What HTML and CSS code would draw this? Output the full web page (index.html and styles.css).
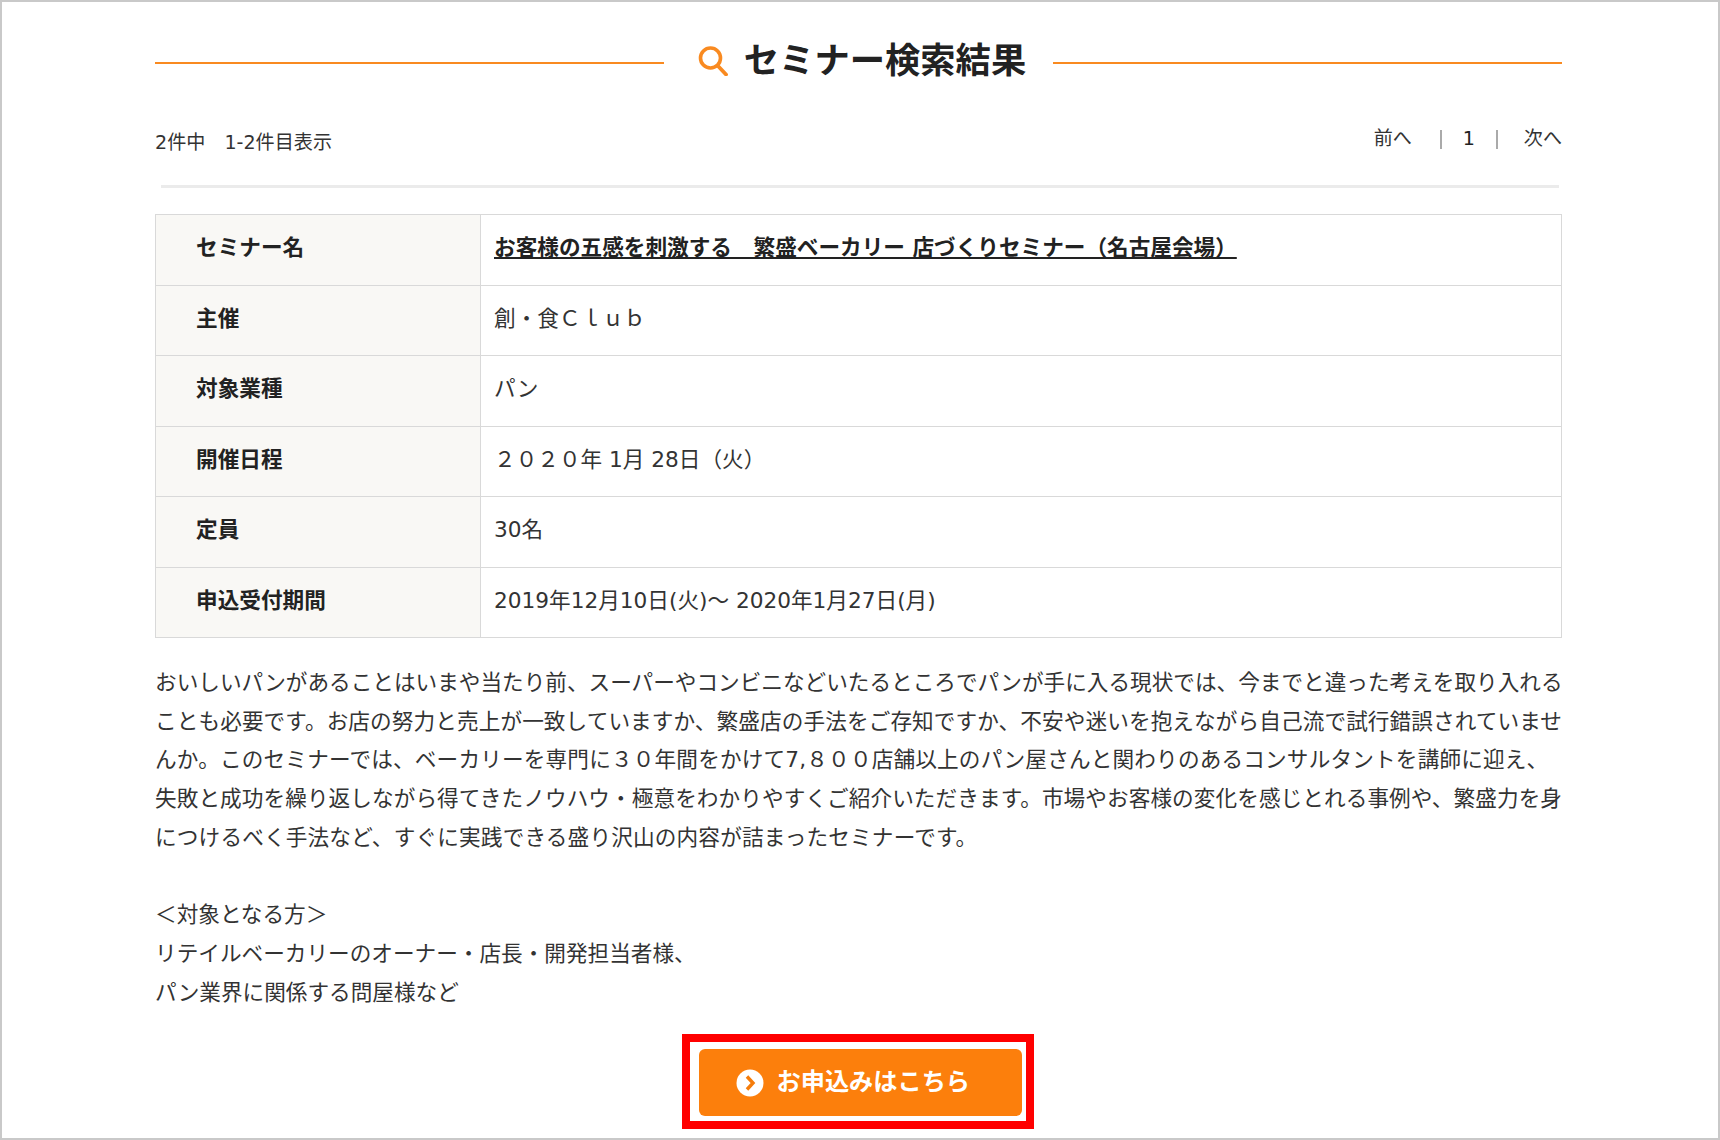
FILE: index.html
```html
<!DOCTYPE html>
<html lang="ja">
<head>
<meta charset="utf-8">
<title>セミナー検索結果</title>
<link rel="stylesheet" href="styles.css">
</head>
<body>
<main class="frame">
  <header class="heading">
    <span class="heading-line"></span>
    <h1 class="heading-title">
      <svg class="heading-icon" viewBox="0 0 30 30" width="30" height="30" aria-hidden="true"><circle cx="12.5" cy="12" r="10" fill="none" stroke="#f98a20" stroke-width="3.6"/><path d="M20 20 L28 28.5" fill="none" stroke="#f98a20" stroke-width="3.8" stroke-linecap="round"/></svg>
      <span>セミナー検索結果</span>
    </h1>
    <span class="heading-line"></span>
  </header>
  <div class="result-bar">
    <p class="result-count">2件中　1-2件目表示</p>
    <nav class="pager">
      <a class="pager-link">前へ</a>
      <span class="pager-sep"></span>
      <a class="pager-current">1</a>
      <span class="pager-sep"></span>
      <a class="pager-link">次へ</a>
    </nav>
  </div>
  <div class="divider"></div>
  <table class="info">
    <tr><th>セミナー名</th><td><a class="seminar-link">お客様の五感を刺激する　繁盛ベーカリー 店づくりセミナー（名古屋会場）</a></td></tr>
    <tr><th>主催</th><td>創・食Ｃｌｕｂ</td></tr>
    <tr><th>対象業種</th><td>パン</td></tr>
    <tr><th>開催日程</th><td>２０２０年 1月 28日（火）</td></tr>
    <tr><th>定員</th><td>30名</td></tr>
    <tr><th>申込受付期間</th><td>2019年12月10日(火)～ 2020年1月27日(月)</td></tr>
  </table>
  <div class="body-text">
    <p class="line fit">おいしいパンがあることはいまや当たり前、スーパーやコンビニなどいたるところでパンが手に入る現状では、今までと違った考えを取り入れる</p>
    <p class="line fit">ことも必要です。お店の努力と売上が一致していますか、繁盛店の手法をご存知ですか、不安や迷いを抱えながら自己流で試行錯誤されていませ</p>
    <p class="line loose">んか。このセミナーでは、ベーカリーを専門に３０年間をかけて7,８００店舗以上のパン屋さんと関わりのあるコンサルタントを講師に迎え、</p>
    <p class="line fit">失敗と成功を繰り返しながら得てきたノウハウ・極意をわかりやすくご紹介いただきます。市場やお客様の変化を感じとれる事例や、繁盛力を身</p>
    <p class="line loose">につけるべく手法など、すぐに実践できる盛り沢山の内容が詰まったセミナーです。</p>
    <p class="line">&nbsp;</p>
    <p class="line">＜対象となる方＞</p>
    <p class="line">リテイルベーカリーのオーナー・店長・開発担当者様、</p>
    <p class="line">パン業界に関係する問屋様など</p>
  </div>
  <div class="cta">
    <div class="cta-highlight">
      <a class="cta-button">
        <svg class="cta-icon" viewBox="0 0 28 28" width="28" height="28" aria-hidden="true"><circle cx="14" cy="14" r="13.5" fill="#fff"/><path d="M11 7.5 L17 14 L11 20.5" fill="none" stroke="#f57c0a" stroke-width="3.4"/></svg>
        <span class="cta-label">お申込みはこちら</span>
      </a>
    </div>
  </div>
</main>
</body>
</html>
```
FILE: styles.css
```css
* { box-sizing: border-box; }
html, body { margin: 0; padding: 0; }
body {
  width: 1720px;
  height: 1140px;
  overflow: hidden;
  background: #fff;
  color: #333;
  font-family: "DejaVu Sans", "Noto Sans CJK JP", sans-serif;
  font-size: 21.64px;
}
p, h1 { margin: 0; }
.frame {
  width: 1720px;
  height: 1140px;
  padding: 0 156px 0 153px;
  border: 2px solid #c9c9c9;
  display: flex;
  flex-direction: column;
}
.frame > * { flex: none; }
.heading {
  display: flex;
  align-items: flex-start;
  height: 100px;
}
.heading-line {
  flex: 1;
  height: 2px;
  background: #f98a20;
  margin-top: 60px;
}
.heading-title {
  width: 389px;
  height: 60px;
  margin-top: 29px;
  padding-left: 7px;
  display: flex;
  align-items: center;
  justify-content: center;
  gap: 16px;
  font-size: 35.3px;
  font-weight: 700;
  line-height: 48px;
  color: #222;
}
.heading-icon { flex: none; }
.result-bar {
  display: flex;
  justify-content: space-between;
  align-items: flex-start;
  height: 83px;
  font-size: 19.1px;
  line-height: 28px;
}
.result-count { padding-top: 27px; }
.pager { display: flex; align-items: center; height: 28px; margin-top: 23px; }
.pager-sep { width: 2px; height: 19px; background: #aaa; }
.pager-link { color: #333; }
.pager-link:first-child { margin-right: 28px; }
.pager-link:last-child { margin-left: 26px; }
.pager-current { width: 54px; text-align: center; color: #222; }
.divider {
  height: 3px;
  margin: 0 3px 0 6px;
  background: #ebebeb;
}
.info {
  width: 100%;
  margin-top: 26px;
  border-collapse: collapse;
  table-layout: fixed;
  line-height: 30px;
}
.info th, .info td {
  height: 70.5px;
  border: 1px solid #d9d9d9;
  padding: 0 0 3px 13px;
  text-align: left;
  vertical-align: middle;
}
.info th {
  width: 325px;
  padding-left: 40px;
  background: #f9f8f5;
  font-weight: 700;
  color: #222;
}
.seminar-link { font-weight: 700; color: #222; text-decoration: underline; }
.body-text { margin-top: 26px; line-height: 38.7px; }
.line { white-space: nowrap; }
.fit { text-align: justify; text-align-last: justify; }
.loose { letter-spacing: 0.17px; }
.cta { margin-top: 22px; padding-right: 2px; display: flex; justify-content: center; }
.cta-highlight {
  width: 352px;
  height: 95px;
  border: 8px solid #ff0000;
  padding: 7px 4px 5px 9px;
  background: #fff;
}
.cta-button {
  display: flex;
  align-items: center;
  height: 100%;
  padding-left: 37px;
  gap: 13px;
  background: #fc7f0c;
  border-radius: 6px;
  color: #fff;
  font-size: 24.2px;
  font-weight: 700;
}
.cta-icon { flex: none; }
.cta-label { margin-top: -6px; }
```
